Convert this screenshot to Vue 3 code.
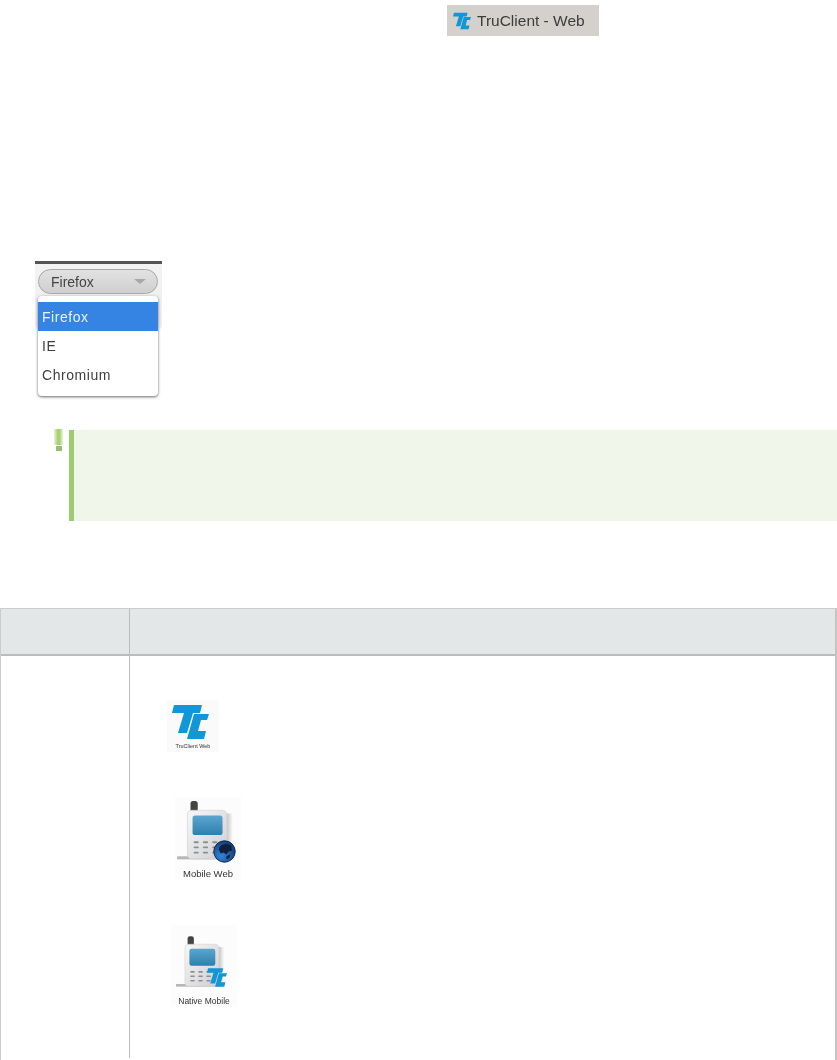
<template>
  <main class="page">
    <svg class="defs" width="0" height="0" aria-hidden="true">
      <defs>
        <symbol id="tc-logo" viewBox="0 0 37 34">
          <polygon points="2,0 30,0 28,8 21,8 15,28 6,28 12,8 0,8" fill="#0f97d8" />
          <polygon points="22,9 37,9 35,15 29,15 26,26 34,26 32,34 15,34" fill="#0f97d8" />
        </symbol>
        <linearGradient id="phone-body" x1="0" y1="0" x2="1" y2="1">
          <stop offset="0" stop-color="#f7f7f7" />
          <stop offset="1" stop-color="#cfcfcf" />
        </linearGradient>
        <linearGradient id="phone-screen" x1="0" y1="0" x2="0" y2="1">
          <stop offset="0" stop-color="#5aa6cf" />
          <stop offset="1" stop-color="#2f7fae" />
        </linearGradient>
        <linearGradient id="phone-shade" x1="0" y1="0" x2="1" y2="0">
          <stop offset="0" stop-color="#999999" stop-opacity="0.55" />
          <stop offset="1" stop-color="#999999" stop-opacity="0" />
        </linearGradient>
        <radialGradient id="globe" cx="0.35" cy="0.7" r="0.8">
          <stop offset="0" stop-color="#2f86dc" />
          <stop offset="1" stop-color="#0b3470" />
        </radialGradient>
        <symbol id="phone" viewBox="0 0 56 60">
          <rect x="0" y="53.5" width="48" height="3" fill="#a0a0a0" opacity="0.75" />
          <rect x="48" y="12" width="6" height="44" fill="url(#phone-shade)" />
          <rect x="13" y="0" width="7" height="12" rx="2.5" fill="#444" />
          <rect x="10" y="9" width="38" height="47" rx="4" fill="url(#phone-body)" stroke="#d0d0d0" stroke-width="0.6" />
          <rect x="15" y="14" width="29" height="19" rx="2.5" fill="url(#phone-screen)" />
          <g fill="#8a8f92">
            <template v-for="row in 3" :key="row">
              <rect v-for="col in 3" :key="col" :x="7 + col * 9" :y="34 + row * 5" width="5" height="1.8" rx="0.8" />
            </template>
          </g>
        </symbol>
      </defs>
    </svg>

    <div class="toolbar-shot">
      <svg class="toolbar-shot__logo"><use href="#tc-logo" /></svg>
      <span>TruClient - Web</span>
    </div>

    <div class="browser-shot">
      <div class="browser-shot__select">
        <span>Firefox</span>
        <i class="browser-shot__arrow"></i>
      </div>
      <span class="browser-shot__grip">⋮</span>
      <ul class="browser-shot__menu">
        <li
          v-for="option in browsers"
          :key="option"
          :class="{ 'is-active': option === 'Firefox' }"
        >
          {{ option }}
        </li>
      </ul>
    </div>

    <div class="note">
      <div class="note__icon">
        <i class="note__bar"></i>
        <i class="note__dot"></i>
      </div>
      <div class="note__box"></div>
    </div>

    <div class="table">
      <div class="table__head"></div>
      <div class="table__head table__head--wide"></div>
      <div class="table__cell"></div>
      <div class="table__cell table__cell--icons">
        <figure class="protocol protocol--web">
          <svg class="protocol__tc"><use href="#tc-logo" /></svg>
          <figcaption>TruClient Web</figcaption>
        </figure>

        <figure class="protocol protocol--mobile">
          <div class="protocol__phone">
            <svg class="protocol__handset"><use href="#phone" /></svg>
            <svg class="protocol__globe" viewBox="0 0 24 24">
              <circle cx="12" cy="12" r="11.2" fill="url(#globe)" stroke="#152a4a" stroke-width="1" />
              <path d="M7 7c3-3 8-4 12-1l1 5-4 1-2 3-3-2-3 1-2-4zM14 17l4-2-1 4-3 1z" fill="#10203a" />
            </svg>
          </div>
          <figcaption>Mobile Web</figcaption>
        </figure>

        <figure class="protocol protocol--native">
          <div class="protocol__phone">
            <svg class="protocol__handset"><use href="#phone" /></svg>
            <svg class="protocol__badge"><use href="#tc-logo" /></svg>
          </div>
          <figcaption>Native Mobile</figcaption>
        </figure>
      </div>
    </div>
  </main>
</template>

<script setup>
const browsers = ["Firefox", "IE", "Chromium"];
</script>

<style>
html,
body {
  margin: 0;
  background: #ffffff;
}
</style>

<style scoped>
.page {
  width: 837px;
  height: 1060px;
  overflow: hidden;
  padding-top: 5px;
  box-sizing: border-box;
  font-family: "Liberation Sans", Arial, sans-serif;
  color: #333333;
}

.defs {
  position: absolute;
}

.toolbar-shot {
  display: flex;
  align-items: center;
  gap: 6px;
  box-sizing: border-box;
  width: 152px;
  height: 31px;
  margin-left: 447px;
  padding-left: 6px;
  background: #d4d1cc;
  color: #3c3c3c;
  font-size: 15.5px;
  filter: blur(0.35px);
}

.toolbar-shot__logo {
  width: 18px;
  height: 18px;
}

.browser-shot {
  position: relative;
  width: 127px;
  height: 136px;
  margin: 225px 0 0 35px;
  border-top: 3px solid #555555;
  background: linear-gradient(#f3f3f3, #ededed 62px, #ffffff 66px);
  filter: blur(0.3px);
}

.browser-shot__select {
  display: flex;
  align-items: center;
  justify-content: space-between;
  box-sizing: border-box;
  width: 120px;
  height: 25px;
  margin: 5px 0 0 3px;
  padding: 0 11px 0 12px;
  border: 1px solid #a8a8a8;
  border-radius: 13px;
  background: linear-gradient(#e2e2e2, #cfcfcf);
  color: #444444;
  font-size: 14px;
}

.browser-shot__arrow {
  width: 0;
  height: 0;
  border-left: 6px solid transparent;
  border-right: 6px solid transparent;
  border-top: 5px solid #a8a8a8;
}

.browser-shot__grip {
  position: absolute;
  top: 46px;
  right: 0;
  color: #777777;
  font-size: 12px;
}

.browser-shot__menu {
  position: absolute;
  top: 32px;
  left: 3px;
  box-sizing: border-box;
  width: 120px;
  height: 100px;
  margin: 0;
  padding: 6px 0 0;
  list-style: none;
  border-radius: 4px;
  background: #ffffff;
  box-shadow: 0 1px 3px rgba(0, 0, 0, 0.6);
  color: #404040;
  font-size: 14px;
  letter-spacing: 0.55px;
}

.browser-shot__menu li {
  display: flex;
  align-items: center;
  height: 29px;
  padding-left: 4px;
}

.browser-shot__menu li.is-active {
  background: #3584e4;
  color: #e8f1fc;
}

.note {
  display: flex;
  gap: 6px;
  height: 91px;
  margin: 30px 0 0 54px;
}

.note__icon {
  display: flex;
  flex-direction: column;
  align-items: center;
  width: 9px;
  margin-top: -1px;
}

.note__bar {
  width: 9px;
  height: 16px;
  background: linear-gradient(90deg, #eeeeee, #a5d568 40%, #a5d568 65%, #f2f2f2);
}

.note__dot {
  width: 6px;
  height: 5px;
  margin-top: 1px;
  background: #9cbc74;
}

.note__box {
  flex: 1;
  border-left: 5px solid #9ccd6a;
  background: #f0f6ea;
}

.table {
  display: grid;
  grid-template-columns: 128px 1fr;
  grid-template-rows: 47px 402px;
  width: 837px;
  box-sizing: border-box;
  margin-top: 87px;
  padding-bottom: 2px;
  border-top: 1px solid #cccccc;
  border-left: 1px solid #cccccc;
  border-right: 2px solid #c4c4c4;
}

.table__head {
  background: #e3e7e8;
  border-bottom: 2px solid #bcbcbc;
}

.table__head--wide,
.table__cell--icons {
  border-left: 1px solid #bcbcbc;
}

.table__cell--icons {
  display: flex;
  flex-direction: column;
  align-items: flex-start;
  padding: 44px 0 0 37px;
}

.protocol {
  display: flex;
  flex-direction: column;
  align-items: center;
  margin: 0;
  color: #333333;
  filter: blur(0.3px);
}

.protocol--web {
  width: 52px;
  height: 52px;
  background: #fafafa;
  font-size: 5.5px;
  line-height: 7px;
}

.protocol__tc {
  align-self: flex-start;
  width: 37px;
  height: 34px;
  margin: 5px 0 4px 5px;
}

.protocol--mobile {
  width: 66px;
  margin: 45px 0 0 8px;
  background: #fcfcfc;
  font-size: 9.5px;
  line-height: 12px;
}

.protocol--native {
  width: 66px;
  margin: 45px 0 0 4px;
  background: #fcfcfc;
  font-size: 8.5px;
  line-height: 11px;
}

.protocol__phone {
  position: relative;
  width: 66px;
  height: 71px;
}

.protocol__handset {
  position: absolute;
  top: 4px;
  left: 2px;
  width: 58px;
  height: 62px;
}

.protocol__globe {
  position: absolute;
  top: 43px;
  left: 38px;
  width: 23px;
  height: 23px;
}

.protocol__badge {
  position: absolute;
  top: 43px;
  left: 36px;
  width: 20px;
  height: 19px;
}

.protocol--native .protocol__handset {
  top: 11px;
  left: 5px;
  width: 50px;
  height: 54px;
}
</style>
